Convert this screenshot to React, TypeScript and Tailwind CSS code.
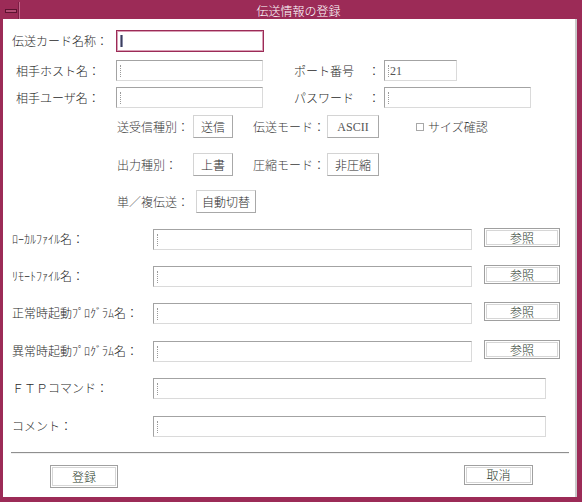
import React from "react";

const font = { fontFamily: '"Noto Sans CJK JP", "Noto Sans", sans-serif' };

function Caret() {
  return <div className="ml-[3px] h-[12px] w-[1px] border-l border-dotted border-[#9a9a9a]" />;
}

function Field({ w, focused, value }: { w: string; focused?: boolean; value?: string }) {
  return (
    <div
      className={`${w} h-full flex items-center bg-white ${
        focused
          ? "border border-[#9c2b57] shadow-[inset_0_0_0_1px_#d9a0b6]"
          : "border border-t-[#a3a3a3] border-l-[#a3a3a3] border-b-[#dadada] border-r-[#dadada]"
      }`}
    >
      {focused ? (
        <div className="ml-[3px] h-[12px] w-[3px] bg-[#3c3f5c] border-x border-[#8a8ca8]" />
      ) : (
        <Caret />
      )}
      {value && (
        <span className="ml-[1px] text-[12px] font-normal text-[#555]" style={{ fontFamily: '"Liberation Serif", serif' }}>
          {value}
        </span>
      )}
    </div>
  );
}

function SmallBtn({ w, children, serif }: { w: string; children: React.ReactNode; serif?: boolean }) {
  return (
    <div
      className={`${w} h-full flex items-center justify-center bg-white border border-t-[#d4d4d4] border-l-[#d4d4d4] border-b-[#a8a8a8] border-r-[#a8a8a8] text-[12px] ${serif ? "font-normal text-[#555]" : "text-[#2a2a2a]"}`}
      style={serif ? { fontFamily: '"Liberation Serif", serif', fontSize: "12px" } : undefined}
    >
      {children}
    </div>
  );
}

function DoubleBtn({ w, h, children }: { w: string; h: string; children: React.ReactNode }) {
  return (
    <div className={`${w} ${h} border border-[#a0a0a0] bg-white p-[1px]`}>
      <div className="w-full h-full border border-[#d6d6d6] flex items-center justify-center text-[12px] text-[#2b3a2b]">
        {children}
      </div>
    </div>
  );
}

function FileRow({ label, mt, button = true, wide }: { label: string; mt: string; button?: boolean; wide?: boolean }) {
  return (
    <div className={`${mt} h-[22px] flex items-start pl-[9px]`}>
      <div className="w-[141px] h-[22px] flex items-center text-[12px] text-[#2a2a2a] whitespace-nowrap">{label}</div>
      <div className="mt-[1px] h-[21px]">
        <Field w={wide ? "w-[393px]" : "w-[319px]"} />
      </div>
      {button && (
        <div className="ml-[12px]">
          <DoubleBtn w="w-[76px]" h="h-[19px]">参照</DoubleBtn>
        </div>
      )}
    </div>
  );
}

export default function App() {
  return (
    <div className="w-[582px] h-[502px] bg-[#9c2b57] flex flex-col pl-[3px] pr-[5px] pt-[2px] pb-[5px] font-light" style={font}>
      {/* title bar */}
      <div className="h-[17px] flex items-stretch">
        <div className="w-[15px] flex items-center justify-center">
          <div className="w-[12px] h-[4px] bg-[#b24d74] border border-[#5c1230]" />
        </div>
        <div className="w-[2px] bg-[#7d1d44] border-r border-[#c2668a]" />
        <div className="flex-1 flex items-center justify-center text-white text-[12px] leading-none">伝送情報の登録</div>
      </div>

      {/* body */}
      <div className="flex-1 bg-white border-r-2 border-[#c9c9c9] flex flex-col text-[#2a2a2a]">
        {/* row 1 */}
        <div className="mt-[11px] h-[22px] flex items-center pl-[9px]">
          <div className="w-[104px] text-[12px] whitespace-nowrap">伝送カード名称：</div>
          <Field w="w-[148px]" focused />
        </div>
        {/* row 2 */}
        <div className="mt-[8px] h-[21px] flex items-center pl-[13px]">
          <div className="w-[100px] text-[12px] whitespace-nowrap">相手ホスト名：</div>
          <Field w="w-[147px]" />
          <div className="ml-[31px] w-[90px] text-[12px] flex whitespace-nowrap">
            <span className="w-[74px]">ポート番号</span>
            <span>：</span>
          </div>
          <Field w="w-[73px]" value="21" />
        </div>
        {/* row 3 */}
        <div className="mt-[6px] h-[21px] flex items-center pl-[13px]">
          <div className="w-[100px] text-[12px] whitespace-nowrap">相手ユーザ名：</div>
          <Field w="w-[147px]" />
          <div className="ml-[31px] w-[90px] text-[12px] flex whitespace-nowrap">
            <span className="w-[74px]">パスワード</span>
            <span>：</span>
          </div>
          <Field w="w-[147px]" />
        </div>
        {/* row 4 */}
        <div className="mt-[7px] h-[23px] flex items-center pl-[114px] text-[12px] text-[#3a3a3a]">
          <div className="w-[76px] whitespace-nowrap">送受信種別：</div>
          <SmallBtn w="w-[40px]">送信</SmallBtn>
          <div className="ml-[20px] w-[74px] whitespace-nowrap">伝送モード：</div>
          <SmallBtn w="w-[52px]" serif>ASCII</SmallBtn>
          <div className="ml-[37px] flex items-center gap-[4px]">
            <div className="w-[8px] h-[8px] border border-[#a8a8a8] bg-white" />
            <span>サイズ確認</span>
          </div>
        </div>
        {/* row 5 */}
        <div className="mt-[15px] h-[23px] flex items-center pl-[114px] text-[12px] text-[#3a3a3a]">
          <div className="w-[76px] whitespace-nowrap">出力種別：</div>
          <SmallBtn w="w-[40px]">上書</SmallBtn>
          <div className="ml-[20px] w-[74px] whitespace-nowrap">圧縮モード：</div>
          <SmallBtn w="w-[52px]">非圧縮</SmallBtn>
        </div>
        {/* row 6 */}
        <div className="mt-[14px] h-[23px] flex items-center pl-[114px] text-[12px] text-[#3a3a3a]">
          <div className="w-[79px] whitespace-nowrap">単／複伝送：</div>
          <SmallBtn w="w-[60px]">自動切替</SmallBtn>
        </div>

        <FileRow label="ﾛｰｶﾙﾌｧｲﾙ名：" mt="mt-[15px]" />
        <FileRow label="ﾘﾓｰﾄﾌｧｲﾙ名：" mt="mt-[15px]" />
        <FileRow label="正常時起動ﾌﾟﾛｸﾞﾗﾑ名：" mt="mt-[15px]" />
        <FileRow label="異常時起動ﾌﾟﾛｸﾞﾗﾑ名：" mt="mt-[16px]" />
        <FileRow label="ＦＴＰコマンド：" mt="mt-[15px]" button={false} wide />
        <FileRow label="コメント：" mt="mt-[16px]" button={false} wide />

        <div className="mt-[15px] ml-[8px] w-[558px] h-[2px] border-t border-[#8f8f8f] border-b border-b-[#f0f0f0]" />

        <div className="mt-[11px] flex items-start justify-between pl-[47px] pr-[42px]">
          <DoubleBtn w="w-[68px]" h="h-[23px]">登録</DoubleBtn>
          <DoubleBtn w="w-[69px]" h="h-[20px]">取消</DoubleBtn>
        </div>
      </div>
    </div>
  );
}
